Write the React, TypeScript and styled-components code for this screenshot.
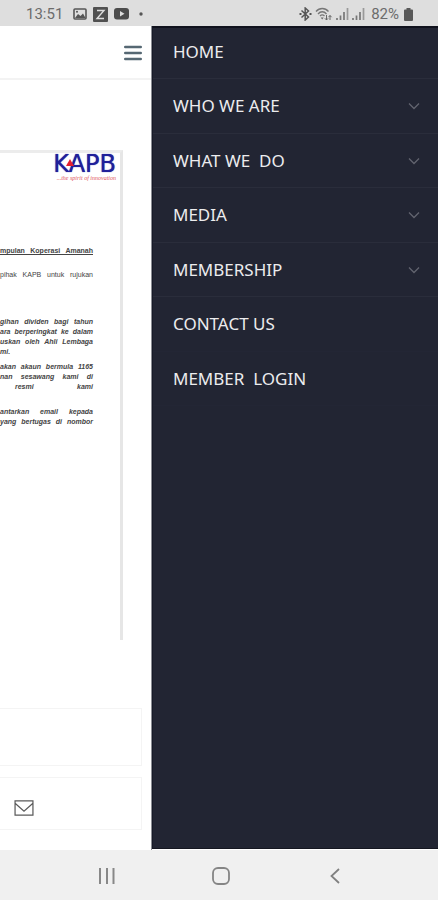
import React from "react";
import styled, { createGlobalStyle, css } from "styled-components";

const Global = createGlobalStyle`
  * { box-sizing: border-box; }
  body { margin: 0; background: #fff; font-family: Roboto, "Noto Sans", sans-serif; }
  button { border: 0; padding: 0; background: none; font: inherit; color: inherit; cursor: pointer; }
  svg { display: block; flex: none; }
`;

const Screen = styled.div`
  display: flex;
  flex-direction: column;
  min-height: 100vh;
  overflow: hidden;
`;

const StatusBar = styled.header`
  display: flex;
  align-items: center;
  justify-content: space-between;
  height: 26px;
  padding: 2px 24px 0 26px;
  background: #dedede;
  color: #6c6c6c;
  font-size: 15px;
  line-height: 24px;
`;

const StatusGroup = styled.div<{ $gap: number }>`
  display: flex;
  align-items: center;
  gap: ${(p) => p.$gap}px;
`;

const StatusText = styled.span<{ $after?: boolean }>`
  margin: ${(p) => (p.$after ? "0 1px 0 3px" : "0 4px 0 0")};
`;

const Body = styled.div`
  display: flex;
  flex: 1;
`;

const Page = styled.main`
  display: flex;
  flex: 1;
  flex-direction: column;
  min-width: 0;
  overflow: hidden;
  background: #fff;
  border-right: 1px solid #8b8d94;
`;

const PageHeader = styled.div`
  display: flex;
  align-items: center;
  justify-content: flex-end;
  height: 54px;
  padding: 2px 9px 0 0;
  border-bottom: 2px solid #f3f3f3;
`;

const Letter = styled.article`
  height: 490px;
  margin: 70px 28px 0 0;
  border-top: 3px solid #ececec;
  border-right: 3px solid #e6e6e6;
  color: #444;
  font-family: "Liberation Sans", Arial, sans-serif;
  font-size: 7px;
  line-height: 10px;
`;

const Logo = styled.div`
  position: relative;
  display: flex;
  flex-direction: column;
  align-items: flex-end;
  padding: 1px 4px 0 0;
`;

const LogoName = styled.span`
  color: #20209a;
  font-family: "DejaVu Sans", sans-serif;
  font-size: 24px;
  line-height: 21px;
  text-shadow: 0 0 1px #20209a;
`;

const LogoMark = styled.svg`
  position: absolute;
  top: 6px;
  right: 46px;
`;

const Tagline = styled.span`
  color: #e0525c;
  font-family: "Liberation Serif", serif;
  font-size: 6px;
  font-style: italic;
  line-height: 7px;
`;

const Paragraph = styled.p<{ $top: number; $kind: "title" | "plain" | "strong" }>`
  margin: ${(p) => p.$top}px 27px 0 0;
  ${(p) =>
    p.$kind === "title" &&
    css`
      font-weight: bold;
      text-decoration: underline;
    `}
  ${(p) =>
    p.$kind === "strong" &&
    css`
      font-style: italic;
      font-weight: bold;
    `}
`;

const Line = styled.span<{ $ragged?: boolean; $indent?: boolean }>`
  display: block;
  white-space: nowrap;
  text-align-last: ${(p) => (p.$ragged ? "left" : "justify")};
  padding-left: ${(p) => (p.$indent ? 15 : 0)}px;
`;

const Panel = styled.section<{ $top: number; $height: number }>`
  display: flex;
  align-items: center;
  height: ${(p) => p.$height}px;
  margin: ${(p) => p.$top}px 9px 0 0;
  padding: 8px 0 0 14px;
  border: 1px solid #f4f4f4;
  border-left: 0;
`;

const Drawer = styled.nav`
  flex: 0 0 286px;
  background: #222533;
  border-top: 2px solid #10121d;
  border-left: 1px solid #171a28;
  border-bottom: 1px solid #151721;
  margin-bottom: 1px;
`;

const MenuList = styled.ul`
  display: grid;
  grid-template-rows: 51px 55px 54px 55px 54px 55px 54px;
  margin: 0;
  padding: 0;
  list-style: none;
`;

const MenuItem = styled.li<{ $faint?: boolean }>`
  display: flex;
  border-bottom: 1px solid ${(p) => (p.$faint ? "#232635" : "#2a2d3b")};

  &:first-child {
    padding-bottom: 3px;
  }
`;

const entry = css`
  display: flex;
  flex: 1;
  align-items: center;
  justify-content: space-between;
  padding: 0 18px 0 20px;
  color: #ececee;
  font-family: "Noto Sans", sans-serif;
  font-size: 17px;
  line-height: 24px;
  text-decoration: none;
  white-space: pre;
`;

const MenuLink = styled.a`
  ${entry}
`;

const MenuToggle = styled.button`
  && {
    ${entry}
  }
`;

const SystemNav = styled.footer`
  display: flex;
  align-items: center;
  justify-content: center;
  gap: 90px;
  height: 50px;
  padding: 2px 0 0 3px;
  background: #f0f0f0;
`;

const SystemButton = styled.button`
  display: grid;
  place-items: center;
  width: 24px;
  height: 24px;
`;

const Signal = () => (
  <svg width="13" height="14" viewBox="0 0 13 14" stroke="#777" strokeWidth="1.7">
    <path d="M1 13v-2M4.500 13V8.500M8 13V5" />
    <path d="M11.500 13V1" stroke="#999" />
  </svg>
);

const Chevron = () => (
  <svg width="12" height="8" viewBox="0 0 12 8" fill="none" stroke="#62646f" strokeWidth="1.3">
    <path d="M1 1.500l5 5 5-5" />
  </svg>
);

const menu = [
  { label: "HOME" },
  { label: "WHO WE ARE", sub: true },
  { label: "WHAT WE  DO", sub: true },
  { label: "MEDIA", sub: true },
  { label: "MEMBERSHIP", sub: true },
  { label: "CONTACT US", faint: true },
  { label: "MEMBER  LOGIN", faint: true },
];

export default function App() {
  return (
    <Screen>
      <Global />
      <StatusBar>
        <StatusGroup $gap={6}>
          <StatusText>13:51</StatusText>
          <svg width="14" height="12" viewBox="0 0 14 12">
            <rect x="1" y="1" width="12" height="10" rx="1" fill="none" stroke="#555" strokeWidth="1.600" />
            <path d="M2 10l3-4 2.500 2L10 5.500 12.500 10z" fill="#555" />
            <circle cx="4" cy="3.800" r="1" fill="#555" />
          </svg>
          <svg width="15" height="15" viewBox="0 0 15 15">
            <rect width="15" height="15" rx="1" fill="#505050" />
            <path d="M4 3.500h7L4 11.500h7" fill="none" stroke="#ddd" strokeWidth="1.400" />
          </svg>
          <svg width="15" height="12" viewBox="0 0 15 12">
            <rect width="15" height="11.500" rx="3" fill="#4c4c4c" />
            <path d="M6 3l4.500 2.800L6 8.600z" fill="#ddd" />
          </svg>
          <svg width="18" height="4" viewBox="0 0 18 4">
            <circle cx="6" cy="2" r="1.700" fill="#555" />
          </svg>
        </StatusGroup>
        <StatusGroup $gap={3}>
          <svg width="13" height="14" viewBox="0 0 13 14" fill="none" stroke="#555" strokeWidth="1.500">
            <path d="M2.500 3.500l7 6.500-3.300 3V1l3.300 3-7 6.500" />
            <path d="M.5 7h2M10.500 7h2" strokeWidth="2" />
          </svg>
          <svg width="18" height="14" viewBox="0 0 18 14" fill="none" stroke="#777" strokeWidth="1.300">
            <path d="M1 4.500C4.500.500 10 .500 13.500 4.500M3 7c2.500-3 6-3 8.500 0M5 9c1.500-1.600 3-1.600 4.500 0" />
            <path d="M7.200 12.500L5.700 10.500h3z" fill="#666" stroke="none" />
            <path d="M11.500 8v5M9.900 11.300l1.600 1.700 1.600-1.700M15 13V8.500M13.400 10.200L15 8.500l1.600 1.700" stroke="#666" strokeWidth="1" />
          </svg>
          <Signal />
          <Signal />
          <StatusText $after>82%</StatusText>
          <svg width="11" height="13" viewBox="0 0 11 13">
            <path d="M3.500 0h4v1.500H9a1 1 0 0 1 1 1V12a1 1 0 0 1-1 1H2a1 1 0 0 1-1-1V2.500a1 1 0 0 1 1-1h1.500z" fill="#585858" />
          </svg>
        </StatusGroup>
      </StatusBar>

      <Body>
        <Page>
          <PageHeader>
            <button aria-label="Toggle menu">
              <svg width="18" height="16" viewBox="0 0 18 16" stroke="#566873" strokeWidth="2.400" strokeLinecap="round">
                <path d="M1.200 2h15.600M1.200 8h15.600M1.200 14h15.600" />
              </svg>
            </button>
          </PageHeader>
          <Letter>
            <Logo>
              <LogoName>KAPB</LogoName>
              <LogoMark width="8" height="7" viewBox="0 0 8 7">
                <path d="M4 0l4 7H0z" fill="#e5202e" />
              </LogoMark>
              <Tagline>...the spirit of innovation</Tagline>
            </Logo>
            <Paragraph $top={64} $kind="title">
              <Line>mpulan Koperasi Amanah</Line>
            </Paragraph>
            <Paragraph $top={14} $kind="plain">
              <Line>pihak KAPB untuk rujukan</Line>
            </Paragraph>
            <Paragraph $top={37} $kind="strong">
              <Line>gihan dividen bagi tahun</Line>
              <Line>ara berperingkat ke dalam</Line>
              <Line>uskan oleh Ahli Lembaga</Line>
              <Line $ragged>mi.</Line>
            </Paragraph>
            <Paragraph $top={5} $kind="strong">
              <Line>akan akaun bermula 1165</Line>
              <Line>nan sesawang kami di</Line>
              <Line $indent>resmi kami</Line>
            </Paragraph>
            <Paragraph $top={15} $kind="strong">
              <Line>antarkan email kepada</Line>
              <Line>yang bertugas di nombor</Line>
            </Paragraph>
          </Letter>
          <Panel $top={68} $height={58} />
          <Panel $top={11} $height={53}>
            <button aria-label="Email">
              <svg width="20" height="16" viewBox="0 0 21 17" fill="none" stroke="#5a5a5a" strokeWidth="1.300">
                <path d="M1 1h19v15H1zM1 3.500l9.500 8.500L20 3.500" />
              </svg>
            </button>
          </Panel>
        </Page>
        <Drawer aria-label="Main menu">
          <MenuList>
            {menu.map((m) => (
              <MenuItem key={m.label} $faint={m.faint}>
                {m.sub ? (
                  <MenuToggle aria-expanded="false">
                    {m.label}
                    <Chevron />
                  </MenuToggle>
                ) : (
                  <MenuLink href="#">{m.label}</MenuLink>
                )}
              </MenuItem>
            ))}
          </MenuList>
        </Drawer>
      </Body>

      <SystemNav>
        <SystemButton aria-label="Recent apps">
          <svg width="18" height="16" viewBox="0 0 18 16" stroke="#888" strokeWidth="2">
            <path d="M2 0v16M9 0v16M15.500 0v16" />
          </svg>
        </SystemButton>
        <SystemButton aria-label="Home">
          <svg width="18" height="18" viewBox="0 0 18 18" fill="none" stroke="#858585" strokeWidth="1.800">
            <rect x="1" y="1" width="16" height="16" rx="5" />
          </svg>
        </SystemButton>
        <SystemButton aria-label="Back">
          <svg width="10" height="16" viewBox="0 0 10 16" fill="none" stroke="#808080" strokeWidth="1.800">
            <path d="M9 1L1.500 8 9 15" />
          </svg>
        </SystemButton>
      </SystemNav>
    </Screen>
  );
}
